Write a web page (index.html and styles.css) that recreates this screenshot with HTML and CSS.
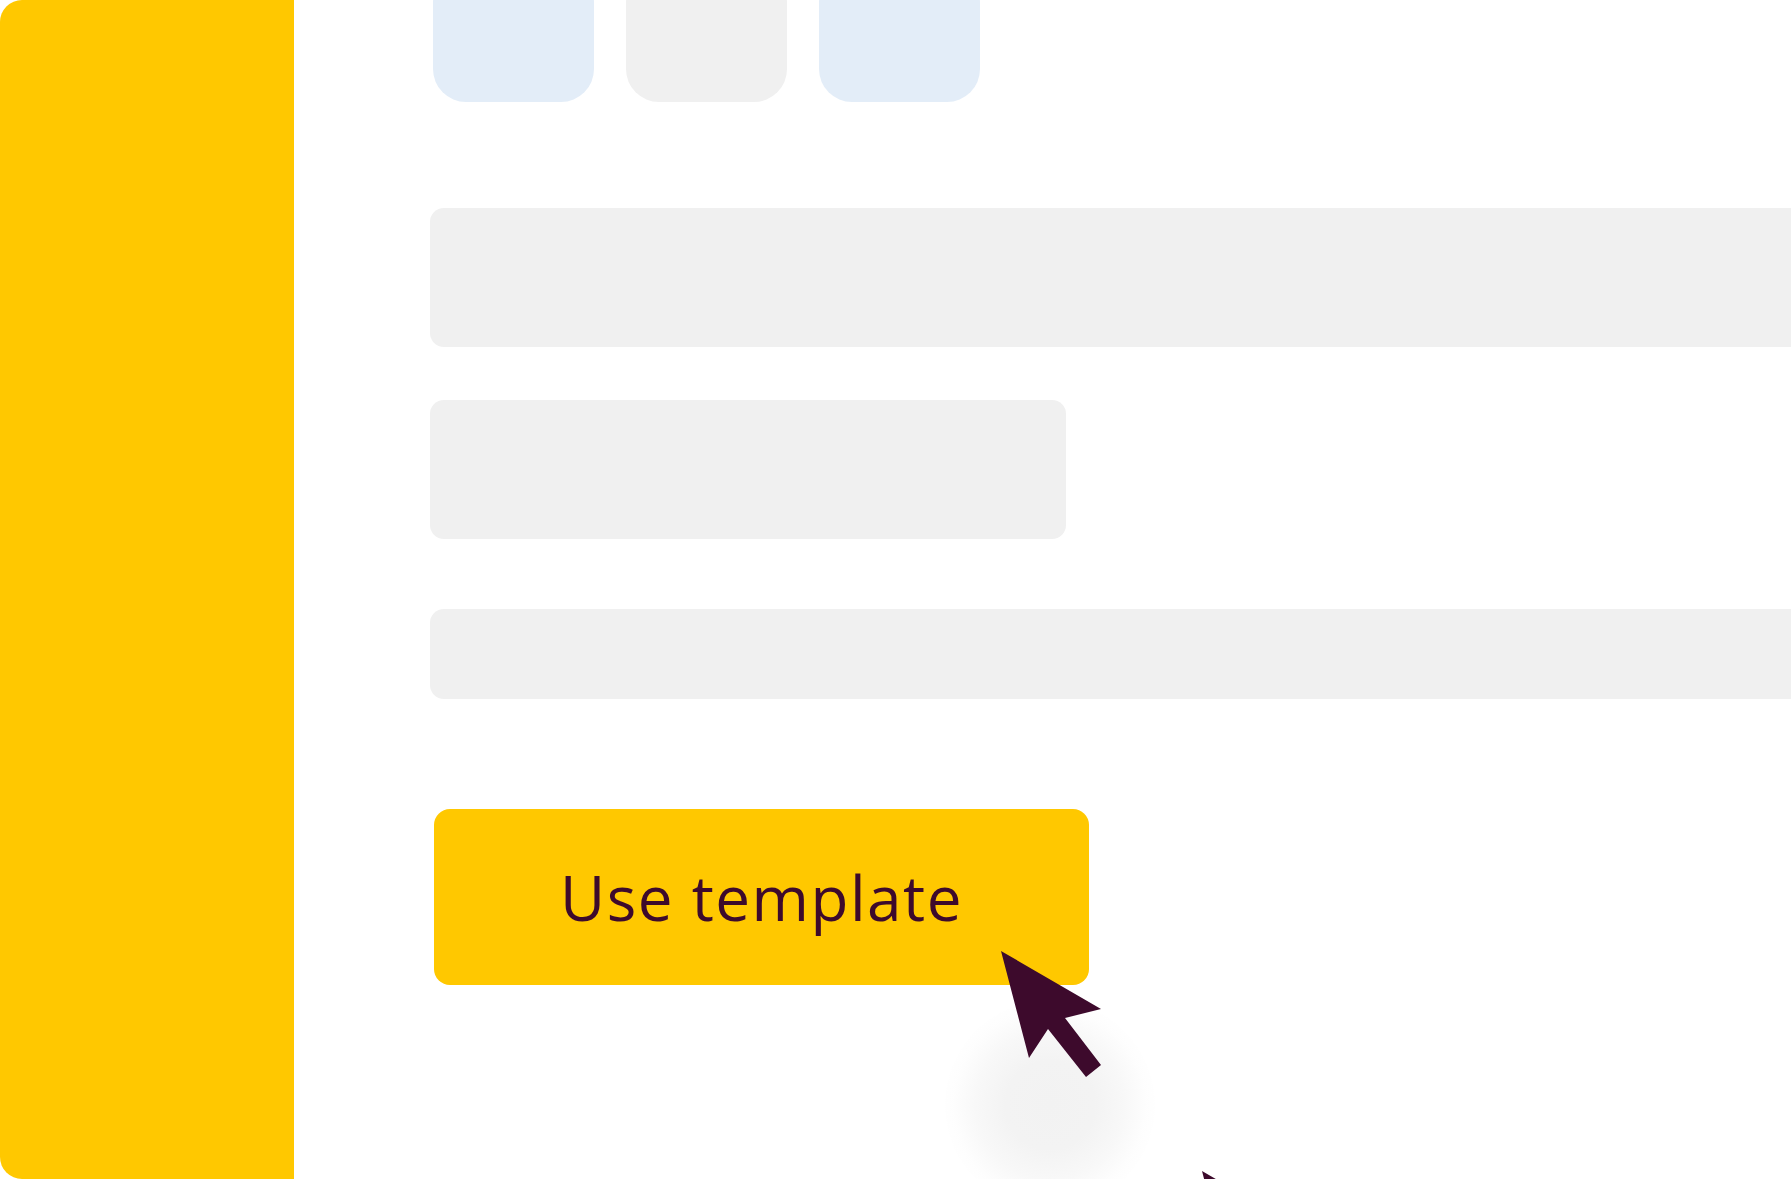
FILE: index.html
```html
<!DOCTYPE html>
<html lang="en">
<head>
    <meta charset="UTF-8">
    <meta name="viewport" content="width=device-width, initial-scale=1.0">
    <title>Use template</title>
    <link rel="stylesheet" href="styles.css">
</head>
<body>

<div class="card">
    <div class="sidebar"></div>

    <div class="main">
        <div class="tabs">
            <div class="tab blue"></div>
            <div class="tab grey"></div>
            <div class="tab blue"></div>
        </div>

        <div class="field tall"></div>
        <div class="field tall short"></div>
        <div class="field thin"></div>

        <button class="use-btn">Use template</button>
    </div>

    <div class="click-glow"></div>
    <svg class="pointer" width="110" height="130" viewBox="0 0 110 130">
        <polygon points="1,1 101,59 65,68 101,115 86,127 48,79 29,108" fill="#3d0a2c"/>
    </svg>
    <svg class="pointer second" width="110" height="130" viewBox="0 0 110 130">
        <polygon points="1,1 101,59 65,68 101,115 86,127 48,79 29,108" fill="#3d0a2c"/>
    </svg>
</div>

</body>
</html>
```

FILE: styles.css
```css
body {
    margin: 0;
    background-color: #fff;
    font-family: "Open Sans", "Noto Sans", sans-serif;
    overflow: hidden;
}
.card {
    position: relative;
    display: flex;
    width: 1791px;
    height: 1179px;
    background-color: #fff;
    border-radius: 22px;
    overflow: hidden;
}
.sidebar {
    width: 294px;
    flex-shrink: 0;
    background-color: #ffc800;
}
.main {
    flex: 1;
    display: flex;
    flex-direction: column;
    padding-left: 136px;
    min-width: 0;
}
.tabs {
    display: flex;
    gap: 32px;
    margin-top: -30px;
    margin-left: 3px;
}
.tab {
    width: 161px;
    height: 132px;
    border-radius: 33px;
}
.tab.blue {
    background-color: #e3edf8;
}
.tab.grey {
    background-color: #f0f0f0;
}
.field {
    background-color: #f0f0f0;
    border-radius: 14px 0 0 14px;
}
.field.tall {
    height: 139px;
    margin-top: 106px;
}
.field.tall.short {
    width: 636px;
    margin-top: 53px;
    border-radius: 14px;
}
.field.thin {
    height: 90px;
    margin-top: 70px;
}
.use-btn {
    width: 655px;
    height: 176px;
    margin-top: 110px;
    margin-left: 4px;
    border: none;
    border-radius: 16px;
    background-color: #ffc800;
    color: #3d0a2c;
    font-family: "Open Sans", "Noto Sans", sans-serif;
    font-size: 62px;
    font-weight: 400;
    letter-spacing: 1.5px;
    padding: 0;
    cursor: pointer;
}
.click-glow {
    position: absolute;
    left: 945px;
    top: 1000px;
    width: 210px;
    height: 210px;
    border-radius: 50%;
    background: radial-gradient(circle, #f2f2f2 0%, #f3f3f3 30%, rgba(245, 245, 245, 0.7) 50%, rgba(250, 250, 250, 0.3) 65%, rgba(255, 255, 255, 0) 75%);
}
.pointer {
    position: absolute;
    left: 1000px;
    top: 950px;
}
.pointer.second {
    left: 1201px;
    top: 1170px;
}
```
